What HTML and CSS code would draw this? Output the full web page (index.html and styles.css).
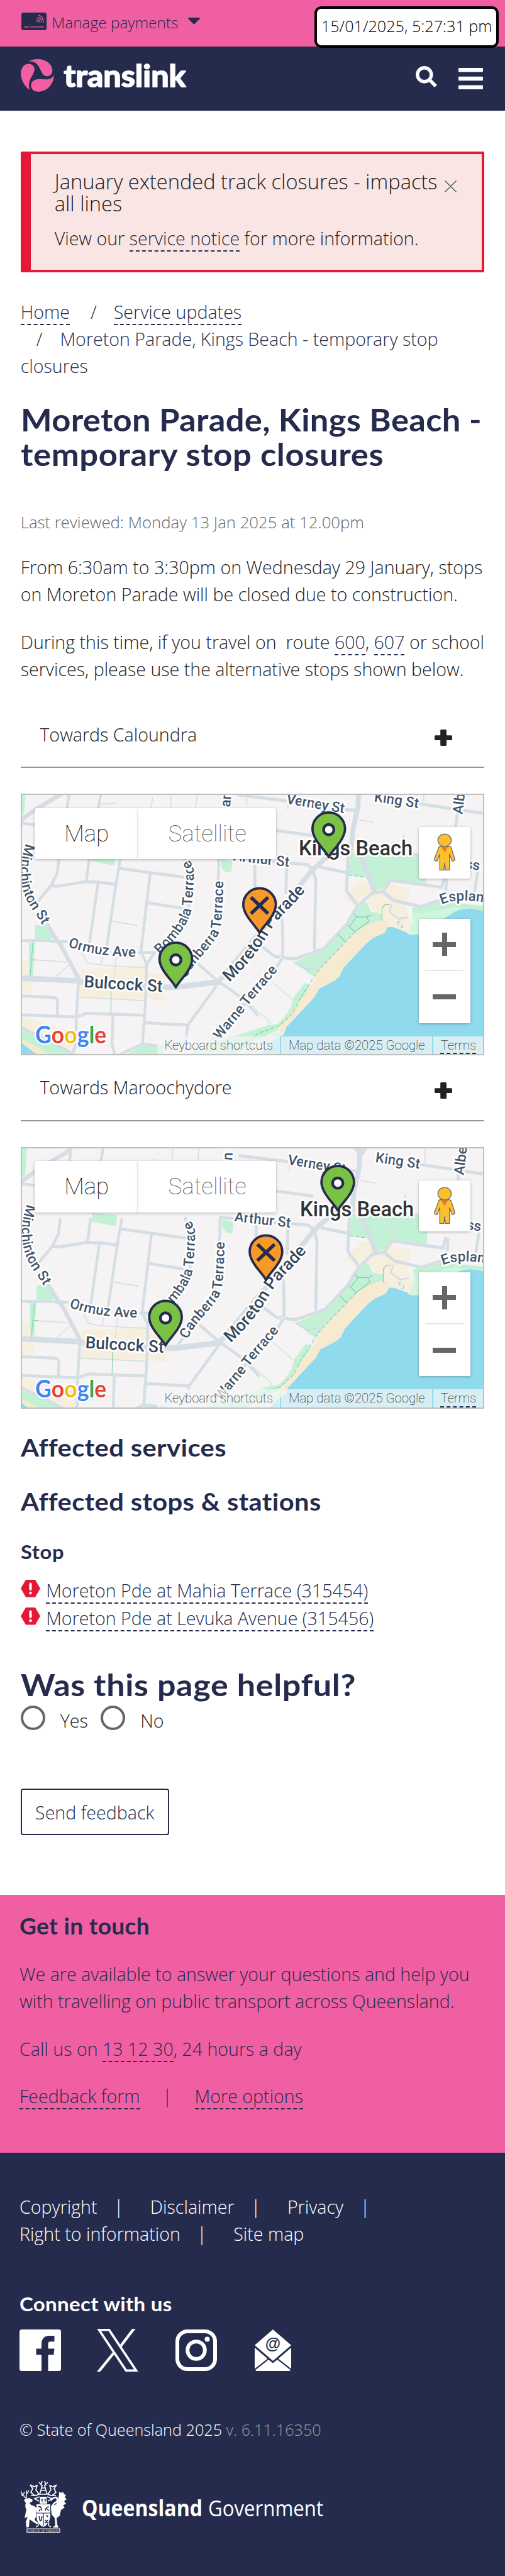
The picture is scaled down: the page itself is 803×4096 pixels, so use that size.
FILE: index.html
```html
<!DOCTYPE html>
<html lang="en">
<head>
<meta charset="utf-8">
<title>Moreton Parade, Kings Beach - temporary stop closures | Translink</title>
<link rel="stylesheet" href="styles.css">
</head>
<body>
<svg class="defs" width="0" height="0" aria-hidden="true">
  <defs>
    <g id="pin-shape"><path d="M0 64C-7 49-38 24-38-2A38 38 0 0 1 38-2C38 24 7 49 0 64Z" stroke="#252b4c" stroke-width="5.5" stroke-linejoin="round"/></g>
    <g id="pin-green"><use href="#pin-shape" fill="#7bc143"/><circle r="12" fill="#fff" stroke="#252b4c" stroke-width="6.5"/></g>
    <g id="pin-orange"><use href="#pin-shape" fill="#f99a28"/><path d="M-20-19L20 19M20-19L-20 19" stroke="#252b4c" stroke-width="8"/></g>

    <g id="tiles">
      <rect x="30" y="1800" width="1120" height="700" fill="#f5f3f4"/>
      <g transform="translate(0 1840) scale(.38266 .40816)">
        <g fill="#c3f1d5">
          <path d="M100-40H160L145 150L100 190Z"/>
          <path d="M553 370L705 380L697 445L553 420Z"/>
          <path d="M1345 408L1418 418L1408 487L1370 480L1345 450Z"/>
          <path d="M213 785H290L320 860L300 870L213 865Z"/>
          <path d="M175 885H213L200 1075H175Z"/>
          <path d="M100 1375L300 1450L480 1540H330L100 1430Z"/>
          <path d="M740 1540L870 1475L1000 1490V1540Z"/>
        </g>
        <g fill="#f7efdd">
          <path d="M495 1040L700 1035L870 1015L900 1060L1010 1065L1008 1220H960L900 1205L485 1210Z"/>
          <path d="M100 985L175 990L178 1075H100Z"/>
          <path d="M100 1105L200 1110L195 1175H100Z"/>
          <path d="M100 1300L240 1340L470 1400V1470L400 1500L100 1370Z"/>
        </g>
        <path d="M100 1415L330 1540H100Z" fill="#f5e9cd"/>
        <path d="M100 1440L230 1530V1560H100Z" fill="#90daee"/>
      </g>
      <g transform="translate(580 1840) scale(.38202 .40816)">
        <path d="M620 380L1040 385L1085 400L1082 548L868 525L818 585H782L712 510L608 498Z" fill="#c3f1d5"/>
        <path d="M585 630L620 580L668 560V535H730L775 595L870 555L988 580L960 690L1008 800L965 835L860 800L845 760L800 760L720 640L650 680Z" fill="#f7efdd"/>
        <path d="M655 690L700 650L725 660L750 710L815 722V765L745 775L650 825L590 880L440 1030L400 1080L340 1040L285 995L400 950L460 930L600 790Z" fill="#c3f1d5"/>
        <path d="M345 1115L375 1140L300 1260Q200 1370 180 1385L40 1450L-100 1540H-400L-220 1460L100 1365L180 1350Q260 1280 275 1200Z" fill="#c3f1d5"/>
        <path d="M1000 690L1180 655L1460 685V720Q1350 680 1260 710L1190 750L1040 840L975 835L1000 770Z" fill="#cff6de"/>
        <path d="M1000 690L1180 650L1460 680V710L1250 680L1080 715L1000 718Z" fill="#c3f1d5"/>
        <path d="M1470 720Q1350 670 1260 710L1190 750L1040 840L980 840L960 825L880 797H848L830 830L760 860L720 890L580 1030L555 1080L520 1105L430 1150L400 1200L330 1270L230 1370L215 1410L160 1440L60 1540H1470Z" fill="#90daee"/>
        <path d="M745 775L820 752L848 765V800L830 830L760 860L720 890L580 1030L555 1080L520 1105L430 1150L400 1200L330 1270L230 1370L215 1412L172 1380L250 1300L310 1220L400 1110L415 1060L590 880L650 825Z" fill="#f6ead0"/>
        <path d="M180 1400L215 1412L160 1440L60 1540H-60L40 1460Z" fill="#dcf4e2"/>
      </g>
      <g id="roads" fill="none" stroke="#d5dee5" stroke-linecap="round" stroke-linejoin="round">
        <g transform="translate(0 1840) scale(.38266 .40816)">
          <g stroke-width="17">
            <path d="M120 203L215 213M430-30L408 115M625-30L600 115M358 405L348 490L310 560L235 645M310 558L350 564L520 538L600 540L710 553M543 405L525 538M733 405L705 560L650 910M597 545L545 890M733 462L1120 512M915 490L858 940M895 658L1115 690"/>
            <path d="M850 943H940L895 1010L860 945M892 1010V1060L885 1250L868 1465M100 875H290L345 880H400M478 1115L465 1310L462 1470L430 1540M100 1190L335 1200Q350 1210 350 1230L348 1300M100 1298L465 1312L530 1290L875 1302M688 1300L682 1470L705 1540M880 1345L1145 1358L1315 1140M1145 1358L1135 1430M1553 400V580"/>
            <path d="M100 1360L290 1445L460 1530M700 1540L870 1465L1010 1485M1333 400V500M950 940C1050 850 1150 760 1150 680L1160 480L1120 400M1080 1120L1200 960C1310 850 1320 800 1330 500M1210 1010L1320 1100L1470 1200L1570 1300"/>
          </g>
          <g stroke-width="6">
            <path d="M615 95L702 90M930 60L920 115M1045-30L1040 115M1212-30L1192 115M1505 45V105M685 765L835 788M210 985L400 997M495 935L530 1000Q600 1020 880 1028M615 1010L625 960M485 1198L875 1218"/>
            <path d="M425 1010L335 1085M708 960L695 1090" stroke="#dfdfe2"/>
          </g>
          <path d="M120 190L215 125L420 10M290 785L330 850L370 900L480 1095" stroke-width="25"/>
          <path d="M100 1088L470 1105L520 1118L990 1140L1060 1142L1300 1115H1330" stroke-width="32"/>
          <path d="M200 885L183 1078M195 985H220M677 1165L675 1290" stroke="#7dceb0" stroke-width="4"/>
        </g>
        <g transform="translate(580 1840) scale(.38202 .40816)">
          <g stroke-width="18">
            <path d="M-60 42L225 75M590 125L655 130M1040 92L1440 148M1275 150L1265 225M165 245L380 272M-180 395L360 440L395 470M440 455L610 488M608 380L598 590L660 665M395 480L410 530L402 920M38 440V580M232 450L228 600M200 740Q210 760 208 960M1210 520L1205 590M1400 480L1380 600M1000 380L1045 386"/>
            <path d="M75 905L160 965L200 970L280 980L400 940L460 920L600 780L655 690L750 605L820 595L870 530L1180 570L1195 515M820 595L885 645L1050 680L1180 640"/>
          </g>
          <path d="M200 985L160 1040L-220 1440" stroke-width="17"/>
          <path d="M875 670L860 710L915 750L970 742M280 1000L350 1040L420 1030" stroke-width="8" stroke="#cfd9e6"/>
          <path d="M680 185L765 198M1070-30V80M950 262L945 290M240 90V125" stroke-width="6"/>
          <path d="M920 400L830 580M420 945L445 985L415 1030L430 1050" stroke-width="6" stroke="#dfdfe2"/>
          <path d="M675-40L668 110L635 250L625 370M690 400L770 595" stroke-width="30"/>
          <path d="M620 -50L675 45L740 -50" stroke-width="20"/>
          <path d="M-190 1115L-40 950L130 760L330 540L390 470L480 395L600 330" stroke-width="30"/>
          <circle cx="200" cy="970" r="10" fill="#f5f3f4" stroke-width="8"/>
          <g stroke="#7dceb0" stroke-width="4.5">
            <path d="M862 668H835L815 688V765M645 722L660 738L722 740L748 728M722 740L735 765L650 824L607 788M660 738L620 790M550 842L586 878"/>
            <path d="M612 500L712 511M650 825L420 1050L360 1140L310 1215L270 1290L190 1360L60 1405L-40 1480" stroke-dasharray="20 14"/>
          </g>
          <path d="M145 1112L270 1215M20 1250L135 1345L110 1370M350 1050L400 1078" stroke="#c3f1d5" stroke-width="6"/>
          <path d="M925 765L910 768L918 785M935 780L942 798L925 802" stroke="#90daee" stroke-width="5"/>
        </g>
      </g>
      <g class="labels">
        <path id="lp-minch" d="M60 1970C46 2012 43 2044 54 2081S82 2130 101 2165"/>
        <path id="lp-bomb" d="M373 2230C406 2199 440 2162 447 2122C450 2093 452 2060 452 2036C451 2022 446 2012 430 1999"/>
        <path id="lp-canb" d="M434 2286C455 2238 505 2207 515 2166C518 2142 521 2085 521 2043"/>
        <path id="lp-more" d="M535 2294C570 2262 604 2222 630 2175C655 2136 680 2120 711 2082"/>
        <path id="lp-warn" d="M513 2430C540 2395 560 2375 579 2348C600 2320 630 2290 650 2262"/>
        <path id="lp-orm" d="M158 2211Q220 2234 318 2235"/>
        <path id="lp-espl" d="M1031 2113Q1072 2092 1180 2118"/>
        <text class="st"><textPath href="#lp-minch">Minchinton St</textPath></text>
        <text class="st"><textPath href="#lp-bomb">Bombala Terrace</textPath></text>
        <text class="st"><textPath href="#lp-canb">Canberra Terrace</textPath></text>
        <text class="st"><textPath href="#lp-warn">Warne Terrace</textPath></text>
        <text class="st"><textPath href="#lp-orm">Ormuz Ave</textPath></text>
        <text class="st"><textPath href="#lp-espl">Esplanade</textPath></text>
        <text class="st" transform="translate(667 1877) rotate(9.5)" textLength="137">Verney St</text>
        <text class="st" transform="translate(872 1872) rotate(8.5)" textLength="105">King St</text>
        <text class="st" transform="translate(1079 1903) rotate(-83)">Albert St</text>
        <text class="st" transform="translate(543 2010) rotate(6.5)" textLength="132">Arthur St</text>
        <text class="st" transform="translate(537 1886) rotate(-86)">an St</text>
        <text class="st" transform="translate(1085 2029) rotate(7)">ss St</text>
        <text class="main-st"><textPath href="#lp-more">Moreton Parade</textPath></text>
        <text class="main-st" transform="translate(195 2306) rotate(3.4)" textLength="184">Bulcock St</text>
        <text class="place" x="697" y="1998" textLength="266">Kings Beach</text>
      </g>
    </g>

    <g id="google" class="google">
      <text x="82" y="2437" textLength="166" lengthAdjust="spacingAndGlyphs"><tspan fill="#4285f4">G</tspan><tspan fill="#ea4335">o</tspan><tspan fill="#fbbc04">o</tspan><tspan fill="#4285f4">g</tspan><tspan fill="#34a853">l</tspan><tspan fill="#ea4335">e</tspan></text>
    </g>
    <g id="pegman" stroke="#6f6f6f" stroke-width="1.6" stroke-linejoin="round">
      <path d="M10 29Q10 26 13 26H29Q32 26 33 29L40 52Q40 55 37 56L35 56L30 42V74H22.500L21 60L19.500 74H12V42L7 56Q2 56 2 52Z" fill="#fdbf2d"/>
      <path d="M14 26H28L21 39Z" fill="#e27f2d" stroke="none"/>
      <circle cx="21" cy="14" r="12.500" fill="#fdbf2d"/>
    </g>
    <g id="hex-alert"><path d="M8 0H23L31 13.700L23 27.400H8L0 13.700Z" fill="#e31937"/><path d="M15.500 6.500V15" stroke="#fff" stroke-width="4" stroke-linecap="round"/><circle cx="15.500" cy="21" r="2.300" fill="#fff"/></g>
  </defs>
</svg>

<div class="topbar">
  <svg class="card-icon" width="40" height="28" viewBox="0 0 59 41"><rect width="59" height="41" rx="5" fill="#252b4c"/><g fill="none" stroke="#f05fa2" stroke-width="2"><path d="M6 33.500H18M21 33.500H53"/><path d="M35 18Q38 19 39 23M36 14Q42 15 43.500 23M38 10Q47 12 48 23M40 6Q52 9 52 23"/></g></svg>
  <span class="manage">Manage payments</span>
  <svg class="caret" width="19" height="11" viewBox="0 0 19 11"><path d="M1 0H18Q19.500 .5 18.500 2L10.500 10Q9.500 11 8.500 10L.5 2Q-.5 .5 1 0Z" fill="#252b4c"/></svg>
  <div class="clock">15/01/2025, 5:27:31 pm</div>
</div>

<header class="header">
  <svg class="logo" width="266" height="56" viewBox="0 0 266 56" role="img" aria-label="translink">
    <g fill="#f05fa2" transform="scale(.227)">
      <path d="M55 20C110-12 215 5 222 82C223 112 202 125 183 124C160 123 150 105 141 86C126 52 112 18 55 20Z"/>
      <path d="M62 220C25 195-5 140 2 92C8 52 32 36 56 37C82 38 98 58 96 80C92 120 42 150 62 220Z"/>
      <path d="M231 113C234 175 190 229 125 232C92 234 74 214 72 190C71 165 90 147 120 145C160 141 212 162 231 113Z"/>
    </g>
    <text class="wordmark" x="68.500" y="45" textLength="194" lengthAdjust="spacingAndGlyphs">translink</text>
  </svg>
  <div class="header-tools">
    <svg width="34" height="34" viewBox="0 0 34 34"><circle cx="13.800" cy="13.800" r="11" fill="none" stroke="#fff" stroke-width="5.400"/><path d="M22.500 22.500L32 32" stroke="#fff" stroke-width="5.500" stroke-linejoin="round"/></svg>
    <svg width="39" height="34" viewBox="0 0 39 34" fill="#fff"><rect width="39" height="6.500" rx="1"/><rect y="13.700" width="39" height="6.500" rx="1"/><rect y="27.500" width="39" height="6.500" rx="1"/></svg>
  </div>
</header>

<main class="main">
  <section class="alert">
    <h2 class="alert-title">January extended track closures - impacts<br>all lines</h2>
    <p class="text">View our <a href="#">service notice</a> for more information.</p>
    <svg class="alert-close" width="19" height="20" viewBox="0 0 19 20" fill="none"><path d="M.5 2.500L18.500 20.500M18.500 2.500L.5 20.500" stroke="#fff" stroke-width="1.600"/><path d="M.5 .5L18.500 18.500M18.500 .5L.5 18.500" stroke="#666" stroke-width="1.700"/></svg>
  </section>

  <nav class="crumbs">
    <div><a href="#">Home</a><span class="slash s1">/</span><a href="#">Service updates</a></div>
    <div><span class="slash s2">/</span>Moreton Parade, Kings Beach - temporary stop</div>
    <div>closures</div>
  </nav>

  <h1 class="title"><span class="t1">Moreton Parade, Kings Beach -</span><br><span class="t2">temporary stop closures</span></h1>
  <p class="reviewed">Last reviewed: Monday 13 Jan 2025 at 12.00pm</p>
  <p class="text p1">From 6:30am to 3:30pm on Wednesday 29 January, stops<br>on Moreton Parade will be closed due to construction.</p>
  <p class="text p2">During this time, if you travel on&nbsp; route <a href="#">600</a>, <a href="#">607</a> or school<br>services, please use the alternative stops shown below.</p>

  <div class="acc acc1"><span>Towards Caloundra</span><svg width="28" height="26" viewBox="0 0 28 26" fill="#222"><rect x="9.200" width="9.800" height="26" rx="1.500"/><rect y="9.300" width="28" height="7.600" rx="1.500"/></svg></div>
  <div class="map">
    <svg class="map-canvas" viewBox="51 1857 1077 605" preserveAspectRatio="none">
      <use href="#tiles"/>
      <use href="#pin-green" x="767" y="1938"/><use href="#pin-orange" x="605.500" y="2115"/><use href="#pin-green" x="410" y="2242"/>
      <use href="#google"/>
    </svg>
    <div class="map-type"><span class="on">Map</span><span class="off">Satellite</span></div>
    <div class="map-tools">
      <div class="peg"><svg width="36" height="60" viewBox="0 0 42 76" preserveAspectRatio="none"><use href="#pegman"/></svg></div>
      <div class="zoomer"><span class="plus"></span><i></i><span class="minus"></span></div>
    </div>
    <div class="credits"><span class="c1">Keyboard shortcuts</span><span class="c2">Map data ©2025 Google</span><span class="c3"><u>Terms</u></span></div>
  </div>

  <div class="acc acc2"><span>Towards Maroochydore</span><svg width="28" height="26" viewBox="0 0 28 26" fill="#222"><rect x="9.200" width="9.800" height="26" rx="1.500"/><rect y="9.300" width="28" height="7.600" rx="1.500"/></svg></div>
  <div class="map">
    <svg class="map-canvas" viewBox="51 1857 1077 605" preserveAspectRatio="none">
      <use href="#tiles" x="3" y="17"/>
      <use href="#pin-green" x="788" y="1938"/><use href="#pin-orange" x="620.500" y="2100"/><use href="#pin-green" x="386" y="2253"/>
      <use href="#google" y="2"/>
    </svg>
    <div class="map-type"><span class="on">Map</span><span class="off">Satellite</span></div>
    <div class="map-tools">
      <div class="peg"><svg width="36" height="60" viewBox="0 0 42 76" preserveAspectRatio="none"><use href="#pegman"/></svg></div>
      <div class="zoomer"><span class="plus"></span><i></i><span class="minus"></span></div>
    </div>
    <div class="credits"><span class="c1">Keyboard shortcuts</span><span class="c2">Map data ©2025 Google</span><span class="c3"><u>Terms</u></span></div>
  </div>

  <h2 class="sub sub1">Affected services</h2>
  <h2 class="sub sub2">Affected stops &amp; stations</h2>
  <h3 class="stop">Stop</h3>
  <ul class="stops">
    <li><svg width="31" height="28"><use href="#hex-alert"/></svg><a href="#">Moreton Pde at Mahia Terrace (315454)</a></li>
    <li><svg width="31" height="28"><use href="#hex-alert"/></svg><a href="#">Moreton Pde at Levuka Avenue (315456)</a></li>
  </ul>

  <h2 class="helpful">Was this page helpful?</h2>
  <div class="radios"><i class="radio"></i><label>Yes</label><i class="radio"></i><label>No</label></div>
  <button class="send">Send feedback</button>
</main>

<section class="touch">
  <h2>Get in touch</h2>
  <p class="t-a">We are available to answer your questions and help you<br>with travelling on public transport across Queensland.</p>
  <p class="t-b">Call us on <a href="#">13 12 30</a>, 24 hours a day</p>
  <p class="t-c"><a href="#">Feedback form</a><span class="bar">|</span><a href="#">More options</a></p>
</section>

<footer class="footer">
  <ul class="flinks">
    <li>Copyright</li><li>Disclaimer</li><li>Privacy</li>
  </ul>
  <ul class="flinks second">
    <li>Right to information</li><li>Site map</li>
  </ul>
  <h2>Connect with us</h2>
  <div class="social">
    <svg class="fb" width="66" height="66" viewBox="0 0 66 66"><rect width="66" height="66" rx="3.500" fill="#fff"/><path d="M35 66V40.300H26.500V30.600H35V23C35 14.500 40 10 47.500 10H55.500V19.200H50C46 19.200 45.500 21 45.500 24V30.600H55.500L54.300 40.300H45.500V66Z" fill="#252b4c"/></svg>
    <svg class="x" width="66" height="68" viewBox="0 0 66 68" fill="none"><path d="M3.500 1.700H19.500L62.500 66.300H46.500Z" stroke="#fff" stroke-width="3.600"/><path d="M61.500 0H56L36 26.500L38.500 30ZM0 68H5.500L29 39L26.500 35.500Z" fill="#fff"/></svg>
    <svg class="ig" width="66" height="66" viewBox="0 0 66 66" fill="none" stroke="#fff"><rect x="3" y="3" width="60" height="60" rx="16" stroke-width="6"/><circle cx="33" cy="33" r="13.800" stroke-width="6"/><circle cx="50.500" cy="15.500" r="4" fill="#fff" stroke="none"/></svg>
    <svg class="mail" width="58" height="66" viewBox="0 0 58 66" fill="#fff"><path d="M29 0L58 25L29 50L0 25Z"/><path d="M0 29L20.500 46.500L0 62.500ZM58 29L37.500 46.500L58 62.500ZM22 48L29 53.500L36 48L57 64.500Q56 66 55 66H3Q2 66 1 64.500Z"/><text x="29" y="31" class="at">@</text></svg>
  </div>
  <p class="copy">© State of Queensland 2025 <span>v. 6.11.16350</span></p>
  <svg class="gov" width="490" height="84" viewBox="0 0 490 84" role="img" aria-label="Queensland Government">
    <g fill="#fff">
      <path d="M10 77V82.500H62V77Z" fill="none" stroke="#fff" stroke-width="1.200"/>
      <text x="36" y="81.500" class="motto">AUDAX AT FIDELIS</text>
      <path d="M14 28L19 31 18 34 14 35 16 39Q22 40 25 44L24 58 22 63 27 67 26 70 20 66 14 62 13 74 9 75 8 66 11 58 6 60 9 46Q6 42 8 36L5 31 9 29Z"/>
      <path d="M9 29L3 23 0 17M3 23L6 19M9 28L9 16M9 22L13 16M6 25L1 23" fill="none" stroke="#fff" stroke-width="1.400"/>
      <path d="M48 42L56 38Q61 30 61 18L65 20 67 18 69 22 72 23 70 27 73 30 69 33 72 37 67 40 70 43 64 47 62 56 57 60 58 70 60 75H51L55 71 54 60 49 54Z"/>
      <path d="M49 43Q52 36 57 34Q60 29 56 27Q51 27 48 32" fill="none" stroke="#fff" stroke-width="2.600"/>
      <path d="M25 38H47V58Q45 70 36 74Q26 70 25 58Z"/>
      <path d="M24 52H48M36 52V72" stroke="#252b4c" stroke-width="1.200"/>
      <path d="M28 42Q33 40 33 48M31 46L29 49M39 48Q40 42 45 42M40 44L45 48M29 57L31 65M34 57L32 65M39 63L43 68M43 63L39 68M41 55L43 58" stroke="#252b4c" stroke-width="1.600" fill="none"/>
      <path d="M31 26H41L42 37H30Z"/>
      <path d="M34 29V35M32 31H36M39 29V35M37 31H41" stroke="#252b4c" stroke-width="1"/>
      <path d="M29 3L34 8 32 16 30 22H42L40 16 38 8 43 3M34 1L32 8M38 1L40 8M15 7L21 10 26 8 24 15 29 22M57 7L51 10 46 8 48 15 43 22M16 24Q24 25 29 22M56 24Q48 25 43 22M15 7L19 13 16 19 22 24M57 7L53 13 56 19 50 24M30 26L22 29 29 33M42 26L50 29 43 33M33 12H39M33 16H39M24 74Q30 72 27 67M48 74Q42 72 45 67" fill="none" stroke="#fff" stroke-width="1.700"/>
    </g>
    <text class="gov-b" x="97" y="57" textLength="192" lengthAdjust="spacingAndGlyphs">Queensland</text>
    <text class="gov-l" x="298" y="57" textLength="183" lengthAdjust="spacingAndGlyphs">Government</text>
  </svg>
</footer>
</body>
</html>
```
FILE: styles.css
```css
* { box-sizing: border-box; }
body {
  margin: 0;
  width: 803px;
  height: 4096px;
  overflow: hidden;
  background: #fff;
  color: #222;
  font: 300 28.6px/43px "Open Sans", "Noto Sans", sans-serif;
}
h1, h2, h3, p, ul { margin: 0; padding: 0; font-weight: 300; }
ul { list-style: none; }
a { color: #252b4c; text-decoration: none; border-bottom: 2px dashed #252b4c; }
svg { display: block; flex: none; }
.defs { position: absolute; }
.main, .header, .topbar, .footer, .touch { white-space: nowrap; }

/* top bar */
.topbar { position: relative; display: flex; align-items: flex-start; height: 73.600px; padding: 19.700px 0 0 33.600px; background: #f05fa2; color: #252b4c; }
.manage { margin-left: 8.600px; margin-top: -5.800px; width: 202px; font-size: 24.400px; }
.caret { margin: 8.700px 0 0 15px; }
.clock { position: absolute; right: 10.300px; top: 10.200px; width: 293px; height: 65.500px; border: 4.100px solid #000; border-radius: 11px; background: #fff; color: #000; font-size: 25.200px; line-height: 54px; text-align: center; padding-left: 1px; z-index: 1; }

/* header */
.header { display: flex; justify-content: space-between; align-items: flex-start; height: 102.200px; padding: 19.400px 35.500px 0 32.700px; background: #252b4c; }
.wordmark { font: 700 47px "Lato", sans-serif; fill: #fff; stroke: #fff; stroke-width: 1.800px; stroke-linejoin: round; }
.header-tools { display: flex; gap: 34px; margin-top: 12px; }
.header-tools svg + svg { margin-top: 3px; }

/* main column */
.main { height: 2837px; padding: 65.200px 32.700px 0; }
.alert { position: relative; height: 192px; padding: 27.500px 0 0 38px; border: 4px solid #e31937; border-left-width: 16.400px; background: #f9e5e3; }
.alert-title { font-size: 32.600px; line-height: 34.400px; margin-bottom: 16px; }
.alert-close { position: absolute; right: 40px; top: 42px; }

.crumbs { margin-top: 41px; color: #252b4c; }
.slash { display: inline-block; }
.s1 { margin: 0 27px 0 33px; }
.s2 { margin: 0 28px 0 25px; }

/* headings use a slightly extended face */
.title, .sub, .stop, .helpful, .touch h2, .footer h2 { width: fit-content; transform-origin: 0 50%; }
.title { margin-top: 37px; color: #252b4c; font: 700 49px/55px "Lato", sans-serif; letter-spacing: .300px; transform: scaleX(1.072); }
.t2 { letter-spacing: .600px; }
.reviewed { margin-top: 60px; color: #666; font-size: 25.750px; line-height: 40px; }
.p1 { margin-top: 30.300px; }
.p2 { margin-top: 32.400px; }

.acc { display: flex; justify-content: space-between; height: 95px; padding: 19.600px 51.500px 0 30.700px; border-bottom: 2px solid #979797; }
.acc svg { margin-top: 13.500px; }
.acc1 { margin: 41.800px 0 40.800px; }
.acc2 { margin: 9.200px 0 41px; }

/* maps */
.map { position: relative; height: 416.100px; border: 2px solid #bfbfbf; overflow: hidden; font-family: "Roboto", sans-serif; }
.map-canvas { width: 100%; height: 100%; }
.labels path { fill: none; }
.labels text { font-family: "Roboto", sans-serif; font-weight: 500; fill: #41546c; stroke: #fff; stroke-width: 8px; stroke-linejoin: round; paint-order: stroke; }
.labels .st { font-size: 33px; }
.labels .main-st { font-size: 39px; fill: #35475c; }
.labels .place { font-size: 48px; fill: #303236; }
.google text { font: 700 57px "Lato", sans-serif; stroke: #fff; stroke-width: 7px; stroke-linejoin: round; paint-order: stroke; }
.map-type { position: absolute; left: 20.500px; top: 20.500px; display: flex; height: 81.700px; font-size: 36.800px; line-height: 81px; font-weight: 100; text-align: center; }
.map-type span { background: #fff; box-shadow: 0 1px 4px rgba(0, 0, 0, .28); }
.on { width: 165px; color: #000; border-radius: 4px 0 0 4px; }
.off { width: 219px; color: #565656; border-radius: 0 4px 4px 0; }
.map-tools { position: absolute; right: 20.500px; top: 51px; width: 82px; }
.peg { display: flex; justify-content: center; padding-top: 10px; height: 81.700px; background: #fff; border-radius: 4px; box-shadow: 0 1px 4px rgba(0, 0, 0, .28); }
.zoomer { display: flex; flex-direction: column; align-items: center; margin-top: 64.500px; height: 165.500px; background: #fff; box-shadow: 0 1px 4px rgba(0, 0, 0, .28); }
.zoomer i { width: 61px; height: 2px; background: #e6e6e6; margin: 22px 0 37px; }
.plus { width: 37px; height: 37px; margin-top: 22px; background: linear-gradient(#666, #666) center / 8px 100% no-repeat, linear-gradient(#666, #666) center / 100% 8px no-repeat; }
.minus { width: 37px; height: 8px; background: #666; }
.credits { position: absolute; right: 0; bottom: 0; display: flex; gap: 2px; height: 28.600px; font-size: 20.400px; line-height: 28px; font-weight: 100; color: #000; text-align: center; }
.credits span { background: rgba(245, 245, 245, .72); }
.c1 { width: 195px; }
.c2 { width: 240px; }
.c3 { width: 79px; }
.c3 u { display: inline-block; height: 28.600px; text-decoration: none; border-bottom: 2px dashed #252b4c; }

/* affected stops */
.sub { color: #252b4c; font: 700 38.500px/46px "Lato", sans-serif; letter-spacing: .350px; transform: scaleX(1.084); }
.sub1 { margin-top: 38.400px; }
.sub2 { margin-top: 39.900px; }
.stop { margin-top: 39.300px; color: #252b4c; font: 700 30px/36px "Lato", sans-serif; letter-spacing: .600px; transform: scaleX(1.09); }
.stops { margin-top: 22px; }
.stops li { display: flex; height: 43.300px; }
.stops li svg { margin: 5px 9.500px 0 0; }
.stops a { height: 43px; }
.helpful { margin-top: 57.600px; color: #252b4c; font: 700 48px/55px "Lato", sans-serif; letter-spacing: .600px; transform: scaleX(1.085); }
.radios { display: flex; margin-top: 5.400px; height: 45.500px; }
.radio { width: 39px; height: 39px; border: 4.400px solid #666; border-radius: 50%; }
.radios label { margin: 2.500px 0 0 24px; width: 64.500px; }
.send { display: block; margin-top: 87px; width: 236px; height: 73.500px; padding: 0; border: 2px solid #252b4c; border-radius: 4px; background: #fff; color: #252b4c; font: inherit; }

/* get in touch */
.touch { height: 410.600px; padding: 29.600px 0 0 31px; background: #f05fa2; color: #252b4c; }
.touch h2 { font: 700 35.500px/42px "Lato", sans-serif; letter-spacing: .300px; transform: scaleX(1.045); }
.t-a { margin-top: 32.500px; }
.t-b { margin-top: 32.700px; }
.t-c { margin-top: 32.100px; }
.bar { display: inline-block; width: 87px; text-align: center; }

/* footer */
.footer { height: 672.600px; padding: 63.500px 0 0 31px; background: #252b4c; color: #fff; }
.flinks { display: flex; }
.flinks li::after { content: "|"; display: inline-block; box-sizing: border-box; width: 84.300px; padding-left: 26.500px; }
.flinks.second li:last-child::after { content: none; }
.footer h2 { margin-top: 70.800px; font: 700 31px/38px "Lato", sans-serif; letter-spacing: .300px; transform: scaleX(1.065); }
.social { display: flex; margin-top: 22.800px; height: 66px; }
.x { margin: -1px 0 0 56.500px; }
.ig { margin-left: 59.500px; }
.mail { margin-left: 60px; }
.at { font: 700 25px "Liberation Sans", sans-serif; text-anchor: middle; fill: #252b4c; }
.copy { margin-top: 74px; font-size: 25.200px; line-height: 38px; }
.copy span { color: #999; }
.gov { margin: 61.500px 0 0 2px; }
.gov-b { font: 700 36px "Open Sans", sans-serif; fill: #fff; }
.gov-l { font: 400 35px "Open Sans", sans-serif; fill: #fff; }
.motto { font: 4.500px "Liberation Serif", serif; text-anchor: middle; letter-spacing: .5px; }
```
